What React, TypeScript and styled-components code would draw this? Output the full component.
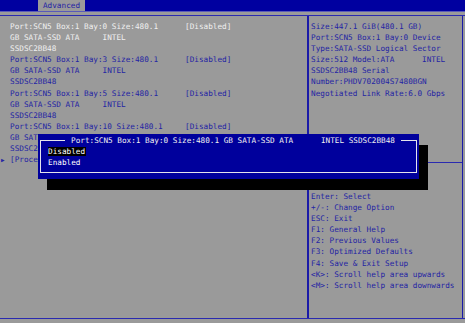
import styled, { createGlobalStyle } from 'styled-components';

const Global = createGlobalStyle`
  html, body {
    margin: 0;
    padding: 0;
    background: #9a9a9a;
  }
  body {
    font-family: 'DejaVu Sans Mono', 'Liberation Mono', monospace;
    font-size: 7.7px;
  }
`;

const Screen = styled.div`
  position: relative;
  width: 465px;
  height: 323px;
  background: #9a9a9a;
  overflow: hidden;
  display: flex;
  flex-direction: column;
`;

const TopBar = styled.div`
  height: 11px;
  background: #0000a0;
  padding-left: 38px;
  display: flex;
  border-bottom: 1px solid #5a5ab8;
`;

const Tab = styled.div`
  width: 47px;
  background: #9a9a9a;
  color: #2424a4;
  display: flex;
  align-items: center;
  justify-content: center;
  line-height: 11px;
`;

const Frame = styled.div`
  margin-top: 3px;
  height: 302px;
  display: grid;
  grid-template-columns: 309px 154px;
  border-top: 1px solid #2a2ab0;
  border-bottom: 1px solid #2a2ab0;
`;

const LeftPane = styled.div`
  border-right: 2px solid #1a1aa8;
  padding-top: 5px;
  line-height: 11.1px;
`;

const Item = styled.div<{ $active?: boolean }>`
  display: grid;
  grid-template-columns: 10px 175px auto;
  color: ${(p) => (p.$active ? '#f0f0f0' : '#2424a4')};
`;

const Arrow = styled.span`
  color: #2424a4;
  font-size: 6px;
  padding-left: 1px;
`;

const Lines = styled.div`
  white-space: pre;
`;

const RightPane = styled.div`
  border-right: 1px solid #1a1aa8;
  display: flex;
  flex-direction: column;
  color: #2424a4;
  line-height: 11.1px;
  white-space: pre;
`;

const HelpInfo = styled.div`
  height: 141px;
  padding: 5px 0 0 2px;
  border-bottom: 1px solid #2a2ab0;
`;

const KeyHelp = styled.div`
  padding: 28px 0 0 2px;
`;

const Dialog = styled.div`
  position: absolute;
  left: 38px;
  top: 134px;
  width: 381px;
  height: 45px;
  box-sizing: border-box;
  background: #00009c;
  box-shadow: 9px 11px 0 #000;
  padding: 1px 2px 6px 2px;
`;

const Box = styled.fieldset`
  margin: 0;
  height: 100%;
  box-sizing: border-box;
  border: 1px solid #e4e4ec;
  padding: 0 0 0 7px;
  color: #f0f0f0;
  line-height: 11.1px;
`;

const Title = styled.legend`
  margin-left: 17px;
  padding: 0 6px;
  white-space: pre;
  line-height: 11px;
`;

const Option = styled.div<{ $selected?: boolean }>`
  span {
    color: #ffffff;
    background: ${(p) => (p.$selected ? '#000' : 'transparent')};
    padding: 0 1px 0 0;
  }
`;

const devices = [
  { bay: '0', active: true },
  { bay: '3' },
  { bay: '5' },
  { bay: '10' },
];

const info = [
  'Size:447.1 GiB(480.1 GB)',
  'Port:SCN5 Box:1 Bay:0 Device',
  'Type:SATA-SSD Logical Sector',
  'Size:512 Model:ATA      INTEL',
  'SSDSC2BB48 Serial',
  'Number:PHDV702004S7480BGN',
  'Negotiated Link Rate:6.0 Gbps',
];

const keys = [
  'Enter: Select',
  '+/-: Change Option',
  'ESC: Exit',
  'F1: General Help',
  'F2: Previous Values',
  'F3: Optimized Defaults',
  'F4: Save & Exit Setup',
  '<K>: Scroll help area upwards',
  '<M>: Scroll help area downwards',
];

export default function App() {
  return (
    <Screen>
      <Global />
      <TopBar>
        <Tab>Advanced</Tab>
      </TopBar>
      <Frame>
        <LeftPane>
          {devices.map((d) => (
            <Item key={d.bay} $active={d.active}>
              <span />
              <Lines>
                {`Port:SCN5 Box:1 Bay:${d.bay} Size:480.1\nGB SATA-SSD ATA     INTEL\nSSDSC2BB48`}
              </Lines>
              <span>[Disabled]</span>
            </Item>
          ))}
          <Item>
            <Arrow>▶</Arrow>
            <Lines>[Proce</Lines>
            <span />
          </Item>
        </LeftPane>
        <RightPane>
          <HelpInfo>
            {info.map((l) => (
              <div key={l}>{l}</div>
            ))}
          </HelpInfo>
          <KeyHelp>
            {keys.map((l) => (
              <div key={l}>{l}</div>
            ))}
          </KeyHelp>
        </RightPane>
      </Frame>
      <Dialog>
        <Box>
          <Title>Port:SCN5 Box:1 Bay:0 Size:480.1 GB SATA-SSD ATA      INTEL SSDSC2BB48</Title>
          <Option $selected>
            <span>Disabled</span>
          </Option>
          <Option>
            <span>Enabled</span>
          </Option>
        </Box>
      </Dialog>
    </Screen>
  );
}
